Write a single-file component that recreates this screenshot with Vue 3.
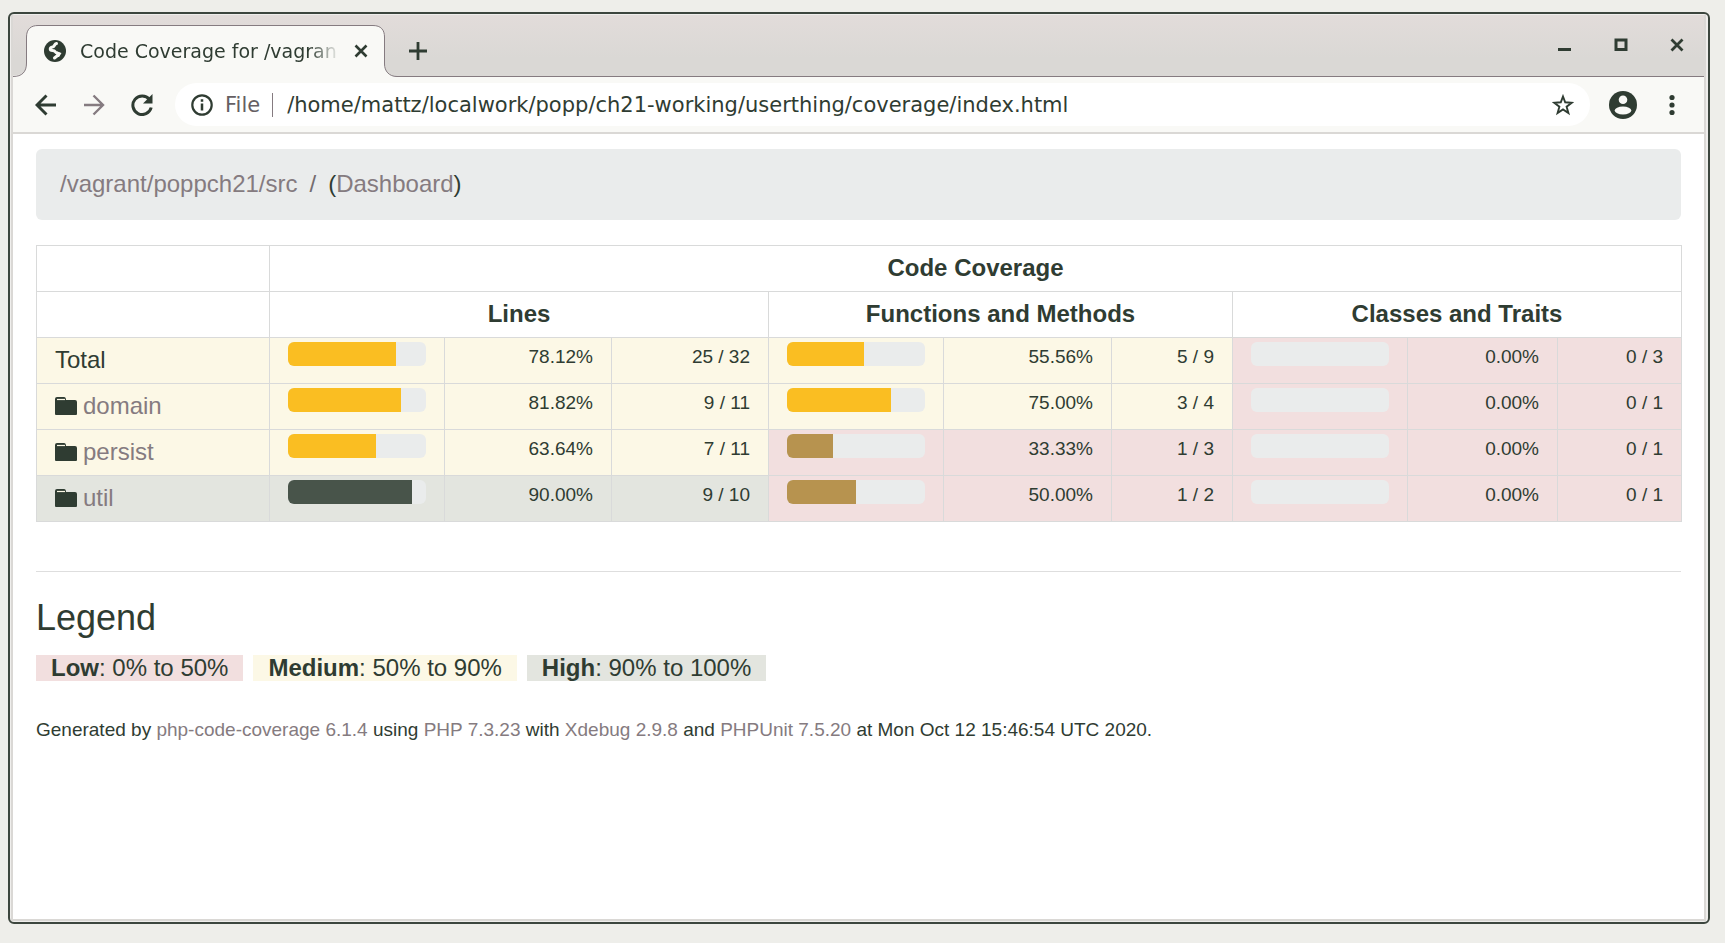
<script setup>
const folders = [
  { name: 'Total', link: false, groups: [['medium', 78.12, '25 / 32'], ['medium', 55.56, '5 / 9'], ['low', 0, '0 / 3']] },
  { name: 'domain', link: true, groups: [['medium', 81.82, '9 / 11'], ['medium', 75, '3 / 4'], ['low', 0, '0 / 1']] },
  { name: 'persist', link: true, groups: [['medium', 63.64, '7 / 11'], ['low', 33.33, '1 / 3'], ['low', 0, '0 / 1']] },
  { name: 'util', link: true, groups: [['high', 90, '9 / 10'], ['low', 50, '1 / 2'], ['low', 0, '0 / 1']] },
]
const groupNames = ['Lines', 'Functions and Methods', 'Classes and Traits']
const legend = [
  { level: 'low', label: 'Low', range: '0% to 50%' },
  { level: 'medium', label: 'Medium', range: '50% to 90%' },
  { level: 'high', label: 'High', range: '90% to 100%' },
]
</script>

<template>
  <div class="desktop">
    <div class="window">
      <div class="inner">
        <header class="strip">
          <div class="tab">
            <svg class="tab-shape" width="384" height="53" viewBox="0 0 384 53">
              <path d="M0 51.5C9 51.5 13.5 48 13.5 39V13C13.5 5 18 1.500 25 1.500H360C368 1.500 371.500 6 371.500 13V40C371.500 47 376 52.500 384 52.500V53H0Z" fill="#f9f9f6" />
              <path d="M0 52.5C9 52.5 13.5 48 13.5 39V13C13.5 5 18 1.500 25 1.500H360C368 1.500 371.500 6 371.500 13V40C371.500 47 376 52.500 384 52.500" fill="none" stroke="#857b80" />
            </svg>
            <div class="tab-content">
              <svg width="22" height="22" viewBox="0 0 22 22">
                <circle cx="11" cy="11" r="11" fill="#2f3c32" />
                <path d="M12.500 3.500C10 4 11 6.500 8.500 7C5.500 7.500 5.500 10.500 8.500 10.500C12 10.500 10.500 12.500 13 13C15.500 13.500 15 15 13 16L10.500 18" fill="none" stroke="#f9f9f6" stroke-width="3" stroke-linecap="round" stroke-linejoin="round" />
                <path d="M13 11.500L17.500 13L15 17L12 17Z" fill="#f9f9f6" />
              </svg>
              <span class="tab-title">Code Coverage for /vagran</span>
              <button class="icon" aria-label="Close tab">
                <svg width="14" height="14" viewBox="0 0 14 14"><path d="M1.500 1.500L12.500 12.500M12.500 1.500L1.500 12.500" stroke="#2f3c32" stroke-width="2.600" /></svg>
              </button>
            </div>
          </div>
          <button class="icon new-tab" aria-label="New tab">
            <svg width="18" height="18" viewBox="0 0 18 18"><path d="M9 0V18M0 9H18" stroke="#2f3c32" stroke-width="2.800" /></svg>
          </button>
          <div class="controls">
            <button class="icon" aria-label="Minimize">
              <svg width="14" height="14" viewBox="0 0 14 14"><path d="M0 11.500H13" stroke="#2f3c32" stroke-width="3" /></svg>
            </button>
            <button class="icon" aria-label="Maximize">
              <svg width="14" height="14" viewBox="0 0 14 14"><path d="M2 2H12V11.500H2Z" fill="none" stroke="#2f3c32" stroke-width="3" /></svg>
            </button>
            <button class="icon" aria-label="Close window">
              <svg width="14" height="14" viewBox="0 0 14 14"><path d="M1.500 1.500L12.500 12.500M12.500 1.500L1.500 12.500" stroke="#2f3c32" stroke-width="2.800" /></svg>
            </button>
          </div>
        </header>

        <nav class="toolbar" aria-label="Browser">
          <button class="icon" aria-label="Back">
            <svg width="22" height="22" viewBox="0 0 22 22"><path d="M21 11H2M11.500 1.500L2 11L11.500 20.500" fill="none" stroke="#2f3c32" stroke-width="2.900" /></svg>
          </button>
          <button class="icon" aria-label="Forward">
            <svg width="22" height="22" viewBox="0 0 22 22"><path d="M1 11H20M10.500 1.500L20 11L10.500 20.500" fill="none" stroke="#857b80" stroke-width="2.400" /></svg>
          </button>
          <button class="icon" aria-label="Reload">
            <svg width="22" height="22" viewBox="0 0 22 22">
              <path d="M18.500 5.500A9.300 9.300 0 1 0 20.200 13.500" fill="none" stroke="#2f3c32" stroke-width="3" />
              <path d="M21.500 0V9.500H12Z" fill="#2f3c32" />
            </svg>
          </button>
          <div class="address">
            <svg width="22" height="22" viewBox="0 0 22 22">
              <circle cx="11" cy="11" r="9.700" fill="none" stroke="#2f3c32" stroke-width="2.200" />
              <path d="M11 9.500V16.500M11 5.200V7.700" stroke="#2f3c32" stroke-width="2.500" />
            </svg>
            <span class="scheme">File</span>
            <span class="divider"></span>
            <input aria-label="Address" value="/home/mattz/localwork/popp/ch21-working/userthing/coverage/index.html">
            <button class="icon" aria-label="Bookmark this page">
              <svg width="22" height="22" viewBox="0 0 22 22"><path d="M11 2.500L13.200 8.300L19.800 8.700L14.600 12.700L16.400 19L11 15.400L5.600 19L7.400 12.700L2.200 8.700L8.800 8.300Z" fill="none" stroke="#2f3c32" stroke-width="1.900" /></svg>
            </button>
          </div>
          <button class="icon avatar" aria-label="Profile">
            <svg width="28" height="28" viewBox="0 0 28 28">
              <circle cx="14" cy="14" r="14" fill="#2f3c32" />
              <circle cx="14" cy="8.700" r="4.300" fill="#f9f9f6" />
              <ellipse cx="14" cy="19.500" rx="8.300" ry="4" fill="#f9f9f6" />
            </svg>
          </button>
          <button class="icon menu" aria-label="Menu">
            <svg width="6" height="22" viewBox="0 0 6 22" fill="#2f3c32"><circle cx="3" cy="3.500" r="2.600" /><circle cx="3" cy="11" r="2.600" /><circle cx="3" cy="18.500" r="2.600" /></svg>
          </button>
        </nav>

        <main>
          <nav class="breadcrumb" aria-label="Breadcrumb">
            <a href="#">/vagrant/poppch21/src</a>
            <span class="slash">/</span>
            <span>(<a href="#">Dashboard</a>)</span>
          </nav>

          <table>
            <colgroup>
              <col class="w-name">
              <col class="w-bar"><col class="w-lines-pct"><col class="w-lines-count">
              <col class="w-bar"><col class="w-func-pct"><col class="w-func-count">
              <col class="w-bar"><col class="w-class-pct"><col class="w-class-count">
            </colgroup>
            <thead>
              <tr><td></td><th colspan="9">Code Coverage</th></tr>
              <tr><td></td><th v-for="g in groupNames" :key="g" colspan="3">{{ g }}</th></tr>
            </thead>
            <tbody>
              <tr v-for="f in folders" :key="f.name">
                <td :class="f.groups[0][0]">
                  <template v-if="f.link">
                    <svg class="folder" width="22" height="20" viewBox="0 0 22 20">
                      <path d="M0 3Q0 1 2 1H9Q11 1 11 4H20Q22 4 22 6V18Q22 19 21 19H1Q0 19 0 18Z" fill="#2f3c32" />
                      <path d="M2 3.500H10" stroke="#fcf8e6" stroke-width="1.200" />
                    </svg><a href="#">{{ f.name }}</a>
                  </template>
                  <template v-else>{{ f.name }}</template>
                </td>
                <template v-for="([level, pct, count], i) in f.groups" :key="i">
                  <td :class="level">
                    <div class="track"><div class="fill" :style="{ width: pct + '%' }"></div></div>
                  </td>
                  <td :class="level"><div class="num">{{ pct.toFixed(2) }}%</div></td>
                  <td :class="level"><div class="num">{{ count }}</div></td>
                </template>
              </tr>
            </tbody>
          </table>

          <footer>
            <h4>Legend</h4>
            <div class="legend">
              <span v-for="l in legend" :key="l.level" :class="l.level"><strong>{{ l.label }}</strong>: {{ l.range }}</span>
            </div>
            <p>
              Generated by <a href="#">php-code-coverage 6.1.4</a> using <a href="#">PHP 7.3.23</a> with
              <a href="#">Xdebug 2.9.8</a> and <a href="#">PHPUnit 7.5.20</a> at Mon Oct 12 15:46:54 UTC 2020.
            </p>
          </footer>
        </main>
      </div>
    </div>
  </div>
</template>

<style>
body {
  background: #eeeeea;
}
</style>

<style scoped>
* {
  box-sizing: border-box;
}
.desktop {
  display: flex;
  min-height: 100vh;
  padding: 12px 15px 19px 8px;
  color: #2f3c32;
  font: 24px/36px "Liberation Sans", Arial, sans-serif;
}
.window {
  display: flex;
  flex: 1;
  min-width: 0;
  border: 2px solid #3c463e;
  border-radius: 6px;
  padding: 1px 2px 1px 1px;
  background: #efeeec;
}
.inner {
  flex: 1;
  display: flex;
  flex-direction: column;
  min-width: 0;
  border: 2px solid #dad8d5;
  border-top-width: 0;
  background: #fff;
}
.icon {
  display: flex;
  flex: none;
  padding: 0;
  border: 0;
  background: none;
}
svg {
  flex: none;
}
.strip {
  display: flex;
  align-items: center;
  height: 62px;
  padding-top: 9px;
  background: linear-gradient(#e2dcda, #dad8d5 70%);
  box-shadow: inset 0 -1px #857b80;
}
.tab {
  display: grid;
  align-self: flex-end;
}
.tab-shape,
.tab-content {
  grid-area: 1 / 1;
}
.tab-content {
  display: flex;
  align-items: center;
  padding: 0 17px 0 31px;
  font: 19px/24px "DejaVu Sans", Verdana, sans-serif;
}
.tab-title {
  flex: 1;
  margin-left: 14px;
  margin-right: 14px;
  white-space: nowrap;
  overflow: hidden;
  mask-image: linear-gradient(90deg, #000 88%, transparent);
}
.tab-content .icon {
  margin-right: 12px;
}
.new-tab {
  margin-left: 12px;
}
.controls {
  display: flex;
  gap: 42px;
  margin: 0 20px 12px auto;
}
.toolbar {
  display: flex;
  align-items: center;
  gap: 26px;
  height: 57px;
  padding: 0 29px 0 22px;
  border-bottom: 2px solid #dad8d5;
  background: #f9f9f6;
}
.address {
  display: flex;
  flex: 1;
  align-items: center;
  height: 43px;
  margin-left: -4px;
  padding: 0 16px;
  border-radius: 22px;
  background: #fff;
  font: 21px/28px "DejaVu Sans", Verdana, sans-serif;
}
.scheme {
  margin: 0 12px;
  color: #655f63;
}
.divider {
  width: 1px;
  height: 24px;
  margin-right: 14px;
  background: #857b80;
}
.address input {
  flex: 1;
  min-width: 0;
  padding: 0;
  border: 0;
  outline: 0;
  background: none;
  color: inherit;
  font: inherit;
}
.avatar {
  margin-left: -7px;
}
.menu {
  margin-left: 6px;
}
main {
  padding: 15px 23px;
}
a {
  color: #857b80;
  text-decoration: none;
}
.breadcrumb {
  display: flex;
  gap: 12px;
  padding: 17px 24px 18px;
  margin-bottom: 25px;
  border-radius: 6px;
  background: #eaecec;
}
.slash {
  color: #746c70;
}
table {
  width: 100%;
  table-layout: fixed;
  border-collapse: collapse;
}
.w-name { width: 233px; }
.w-bar { width: 175px; }
.w-lines-pct { width: 167px; }
.w-lines-count { width: 157px; }
.w-func-pct { width: 168px; }
.w-func-count { width: 121px; }
.w-class-pct { width: 150px; }
.w-class-count { width: 124px; }
td,
th {
  padding: 4px 18px 5px;
  border: 1px solid #d9dada;
  vertical-align: top;
}
thead tr {
  height: 46px;
}
.low {
  background: #f2dfdf;
}
.medium {
  background: #fcf8e6;
}
.high {
  background: #e3e5df;
}
.folder {
  margin-right: 6px;
  vertical-align: -2px;
}
.track {
  height: 24px;
  overflow: hidden;
  border-radius: 6px;
  background: #eaecec;
}
.fill {
  height: 100%;
  background: #fabe22;
}
.low .fill {
  background: #b7934f;
}
.high .fill {
  background: #48544a;
}
.num {
  font-size: 19px;
  line-height: 30px;
  text-align: right;
}
footer {
  margin-top: 49px;
  padding-top: 24px;
  border-top: 1px solid #dedede;
}
h4 {
  margin: 0 0 15px;
  font-size: 36px;
  font-weight: 400;
  line-height: 44px;
}
.legend {
  display: flex;
  gap: 10px;
  line-height: 26px;
}
.legend span {
  padding: 0 15px;
}
p {
  margin: 34px 0 0;
  font-size: 19px;
  line-height: 30px;
}
</style>
